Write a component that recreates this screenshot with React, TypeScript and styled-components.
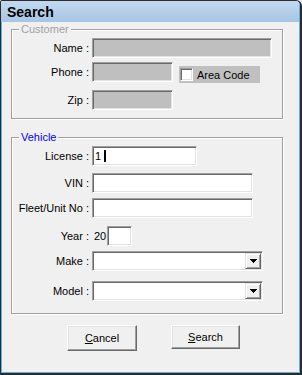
import styled, { createGlobalStyle } from 'styled-components'

const GlobalStyle = createGlobalStyle`
  html, body {
    margin: 0;
    padding: 0;
    background: #f0f0f0;
  }
  body {
    font-family: 'Liberation Sans', Arial, sans-serif;
    font-size: 11px;
    color: #000;
  }
`

const Window = styled.div`
  width: 302px;
  height: 375px;
  box-sizing: border-box;
  border: 1px solid #2c2c2c;
  border-right-width: 2px;
  border-bottom-width: 2px;
  border-radius: 2px 6px 0 0;
  background: #f0f0f0;
  box-shadow: inset 1px 0 0 #58b6e6, inset -1px -1px 0 #58b6e6;
  display: flex;
  flex-direction: column;
  overflow: hidden;
`

const TitleBar = styled.div`
  height: 21px;
  flex-shrink: 0;
  display: flex;
  align-items: center;
  padding-left: 6px;
  background: linear-gradient(#c3d9f0, #a8c5e4);
  box-shadow: inset -1px 0 0 #58b6e6;
  font-size: 14px;
  font-weight: bold;
  color: #000;
`

const Body = styled.div`
  display: flex;
  flex-direction: column;
  padding: 7px 0 0 10px;
`

const Group = styled.div<{ $mt?: number; $pb: number }>`
  position: relative;
  width: 272px;
  box-sizing: border-box;
  margin-top: ${(p) => p.$mt ?? 0}px;
  padding: 8px 0 ${(p) => p.$pb}px 0;
  border: 1px solid #a0a0a0;
  box-shadow: inset 1px 1px 0 #fff, 1px 1px 0 #fff;
`

const Legend = styled.div<{ $color: string }>`
  position: absolute;
  top: -7px;
  left: 7px;
  padding: 0 2px;
  line-height: 13px;
  background: #f0f0f0;
  color: ${(p) => p.$color};
`

const Row = styled.div<{ $mt?: number }>`
  display: flex;
  align-items: center;
  height: 20px;
  margin-top: ${(p) => p.$mt ?? 0}px;
`

const Label = styled.div`
  width: 77px;
  flex-shrink: 0;
  margin-right: 3px;
  text-align: right;
  white-space: nowrap;
`

const Field = styled.div<{ $w: number; $disabled?: boolean }>`
  width: ${(p) => p.$w}px;
  height: 20px;
  box-sizing: border-box;
  flex-shrink: 0;
  display: flex;
  align-items: center;
  padding: 0 2px;
  border: 1px solid;
  border-color: #a0a0a0 #fff #fff #a0a0a0;
  box-shadow: inset 1px 1px 0 #696969, inset -1px -1px 0 #e3e3e3;
  background: ${(p) => (p.$disabled ? '#bfbfbf' : '#fff')};
`

const Caret = styled.span`
  display: inline-block;
  width: 2px;
  height: 12px;
  margin-left: 3px;
  background: #000;
`

const Select = styled(Field)`
  justify-content: flex-end;
  padding: 1px;
`

const DropButton = styled.div`
  width: 16px;
  height: 16px;
  box-sizing: border-box;
  display: flex;
  align-items: center;
  justify-content: center;
  background: #f0f0f0;
  border: 1px solid;
  border-color: #e3e3e3 #696969 #696969 #e3e3e3;
  box-shadow: inset 1px 1px 0 #fff, inset -1px -1px 0 #a0a0a0;
`

const CheckPanel = styled.div`
  width: 81px;
  height: 17px;
  margin: 4px 0 0 6px;
  align-self: flex-start;
  display: flex;
  align-items: center;
  background: #c0c0c0;
`

const CheckBox = styled.div`
  width: 13px;
  height: 13px;
  box-sizing: border-box;
  margin: 0 4px 0 1px;
  border: 1px solid;
  border-color: #a0a0a0 #fff #fff #a0a0a0;
  box-shadow: inset 1px 1px 0 #696969, inset -1px -1px 0 #e3e3e3;
  background: #fff;
`

const YearPrefix = styled.span`
  width: 13px;
  padding-left: 2px;
  flex-shrink: 0;
  overflow: hidden;
`

const ButtonRow = styled.div`
  display: flex;
  align-items: flex-start;
  margin-top: 11px;
  padding-left: 56px;
`

const Button = styled.button<{ $w: number; $h: number; $ml?: number }>`
  width: ${(p) => p.$w}px;
  height: ${(p) => p.$h}px;
  margin-left: ${(p) => p.$ml ?? 0}px;
  padding: 0;
  font-family: 'Liberation Sans', Arial, sans-serif;
  font-size: 11px;
  color: #000;
  background: #f0f0f0;
  border: 1px solid;
  border-color: #fff #696969 #696969 #fff;
  box-shadow: inset -1px -1px 0 #a0a0a0, inset 1px 1px 0 #e3e3e3;
  cursor: pointer;
`

function Arrow() {
  return (
    <svg width="7" height="4" viewBox="0 0 7 4" shapeRendering="crispEdges">
      <path d="M0 0h7v1H0zM1 1h5v1H1zM2 2h3v1H2zM3 3h1v1H3z" fill="#000" />
    </svg>
  )
}

function Combo({ label, mt }: { label: string; mt: number }) {
  return (
    <Row $mt={mt}>
      <Label>{label} :</Label>
      <Select $w={171}>
        <DropButton>
          <Arrow />
        </DropButton>
      </Select>
    </Row>
  )
}

export default function App() {
  return (
    <>
      <GlobalStyle />
      <Window>
        <TitleBar>Search</TitleBar>
        <Body>
          <Group $pb={8}>
            <Legend $color="#a0a0a0">Customer</Legend>
            <Row>
              <Label>Name :</Label>
              <Field $w={180} $disabled />
            </Row>
            <Row $mt={4}>
              <Label>Phone :</Label>
              <Field $w={81} $disabled />
              <CheckPanel>
                <CheckBox />
                Area Code
              </CheckPanel>
            </Row>
            <Row $mt={8}>
              <Label>Zip :</Label>
              <Field $w={81} $disabled />
            </Row>
          </Group>

          <Group $mt={18} $pb={12}>
            <Legend $color="#0000ff">Vehicle</Legend>
            <Row>
              <Label>License :</Label>
              <Field $w={105}>
                1<Caret />
              </Field>
            </Row>
            <Row $mt={7}>
              <Label>VIN :</Label>
              <Field $w={161} />
            </Row>
            <Row $mt={5}>
              <Label>Fleet/Unit No :</Label>
              <Field $w={161} />
            </Row>
            <Row $mt={8}>
              <Label>Year :</Label>
              <YearPrefix>20</YearPrefix>
              <Field $w={25} />
            </Row>
            <Combo label="Make" mt={5} />
            <Combo label="Model" mt={10} />
          </Group>

          <ButtonRow>
            <Button $w={70} $h={26}>
              <u>C</u>ancel
            </Button>
            <Button $w={69} $h={24} $ml={34}>
              <u>S</u>earch
            </Button>
          </ButtonRow>
        </Body>
      </Window>
    </>
  )
}
